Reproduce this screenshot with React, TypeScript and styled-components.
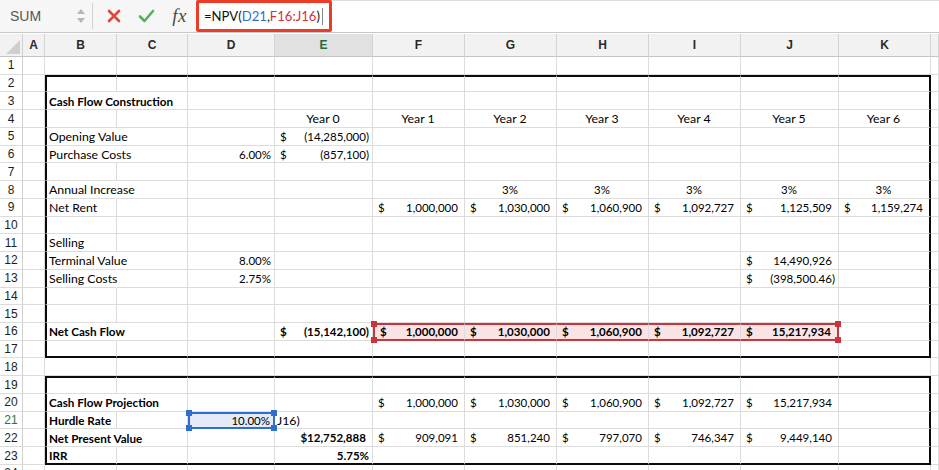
import React from "react";
import styled, { createGlobalStyle, css } from "styled-components";

const GRID = "#dcdcdc";
const CELL_FONT = `"Lato", "Open Sans", sans-serif`;
const UI_FONT = `"Liberation Sans", Arial, sans-serif`;

const GlobalStyle = createGlobalStyle`
  html, body {
    margin: 0;
    padding: 0;
    background: #ffffff;
    overflow: hidden;
  }
`;

type Align = "l" | "r" | "c";

type CellSpec = {
  t?: string;
  acct?: string;
  a?: Align;
  b?: boolean;
  pad?: boolean;
  spill?: boolean;
};

type Range = { c1: number; c2: number; r1: number; r2: number; color: string; fill?: string };

const COLS = ["A", "B", "C", "D", "E", "F", "G", "H", "I", "J", "K", ""];
const WIDTHS = [23, 22, 72, 71, 87, 98, 92, 92, 92, 92, 98, 92, 8];

const years = (from: number, to: number, make: (i: number) => CellSpec) => {
  const out: Record<string, CellSpec> = {};
  for (let i = from; i <= to; i++) out[COLS[i]] = make(i);
  return out;
};

const nums = (vals: string[], bold = false) => {
  const out: Record<string, CellSpec> = {};
  vals.forEach((v, i) => {
    out[COLS[5 + i]] = { acct: v, b: bold };
  });
  return out;
};

const SHEET: Record<number, Record<string, CellSpec>> = {
  3: { B: { t: "Cash Flow Construction", b: true, spill: true } },
  4: years(4, 10, i => ({ t: `Year ${i - 4}`, a: "c" })),
  5: { B: { t: "Opening Value", spill: true }, E: { acct: "(14,285,000)" } },
  6: { B: { t: "Purchase Costs", spill: true }, D: { t: "6.00%", a: "r" }, E: { acct: "(857,100)" } },
  8: { B: { t: "Annual Increase", spill: true }, ...years(6, 10, () => ({ t: "3%", a: "c" })) },
  9: {
    B: { t: "Net Rent" },
    ...nums(["1,000,000", "1,030,000", "1,060,900", "1,092,727", "1,125,509", "1,159,274"])
  },
  11: { B: { t: "Selling" } },
  12: { B: { t: "Terminal Value", spill: true }, D: { t: "8.00%", a: "r" }, J: { acct: "14,490,926" } },
  13: { B: { t: "Selling Costs", spill: true }, D: { t: "2.75%", a: "r" }, J: { acct: "(398,500.46)" } },
  16: {
    B: { t: "Net Cash Flow", b: true, spill: true },
    E: { acct: "(15,142,100)", b: true },
    ...nums(["1,000,000", "1,030,000", "1,060,900", "1,092,727", "15,217,934"], true)
  },
  20: {
    B: { t: "Cash Flow Projection", b: true, spill: true },
    ...nums(["1,000,000", "1,030,000", "1,060,900", "1,092,727", "15,217,934"])
  },
  21: { B: { t: "Hurdle Rate", b: true }, D: { t: "10.00%", a: "r" }, E: { t: "J16)" } },
  22: {
    B: { t: "Net Present Value", b: true, spill: true },
    E: { t: "$12,752,888", a: "r", b: true, pad: true },
    ...nums(["909,091", "851,240", "797,070", "746,347", "9,449,140"])
  },
  23: { B: { t: "IRR", b: true }, E: { t: "5.75%", a: "r", b: true } }
};

const BOXES: Range[] = [
  { c1: 1, c2: 10, r1: 2, r2: 17, color: "#0a0a0a" },
  { c1: 1, c2: 10, r1: 19, r2: 23, color: "#0a0a0a" }
];

const SELECTIONS: Range[] = [
  { c1: 5, c2: 9, r1: 16, r2: 16, color: "#c8353f", fill: "#f9e3e4" },
  { c1: 3, c2: 3, r1: 21, r2: 21, color: "#2f6ecb", fill: "#e3ebf8" }
];

const ACTIVE_COL = 4;
const ACTIVE_ROW = 21;

const Page = styled.div`
  width: 939px;
  height: 470px;
  overflow: hidden;
  background: #ffffff;
  display: flex;
  flex-direction: column;
`;

const FormulaBar = styled.div`
  flex-shrink: 0;
  height: 32px;
  display: flex;
  align-items: stretch;
  background: #f6f6f6;
  border-bottom: 1px solid #c9c9c9;
`;

const NameBox = styled.div`
  width: 93px;
  box-sizing: border-box;
  border-right: 1px solid #d3d3d3;
  margin: 3px 0;
  display: flex;
  align-items: center;
  justify-content: space-between;
  padding: 0 7px 0 10px;
  font-family: ${UI_FONT};
  font-size: 14px;
  color: #555555;
`;

const Spinner = styled.div`
  display: flex;
  flex-direction: column;
  gap: 4px;
`;

const ActionGroup = styled.div`
  display: flex;
  align-items: center;
  padding-left: 4px;
`;

const ActionButton = styled.div`
  width: 33px;
  height: 100%;
  display: flex;
  align-items: center;
  justify-content: center;
`;

const Fx = styled.span`
  font-family: "Liberation Serif", "Times New Roman", serif;
  font-style: italic;
  font-size: 19px;
  color: #4a4a4a;
  letter-spacing: 0.5px;
`;

const FormulaField = styled.div`
  flex: 1;
  background: #ffffff;
  border-top: 1px solid #dddddd;
  display: flex;
  align-items: stretch;
`;

const Highlight = styled.div`
  width: 136px;
  box-sizing: border-box;
  border: 3px solid #ec3b26;
  border-radius: 2px;
  margin-top: -1px;
  display: flex;
  align-items: center;
  padding-left: 5px;
  font-family: ${CELL_FONT};
  font-size: 13.1px;
  color: #111111;
`;

const Ref = styled.span<{ $color: string }>`
  color: ${p => p.$color};
`;

const Caret = styled.span`
  display: inline-block;
  width: 1px;
  height: 17px;
  background: #8a8a8a;
  margin-left: 2px;
`;

const Sheet = styled.div`
  flex-shrink: 0;
  margin-top: 1px;
  display: grid;
  grid-template-columns: ${WIDTHS.map(w => `${w}px`).join(" ")};
  grid-template-rows: 23px repeat(24, 17.74px);
`;

const Corner = styled.div`
  background: #f2f2f2;
  border-right: 1px solid #cfcfcf;
  border-bottom: 1px solid #c4c4c4;
  box-sizing: border-box;
  display: flex;
  align-items: flex-end;
  justify-content: flex-end;
  padding: 0 2px 2px 0;
`;

const ColHead = styled.div<{ $active?: boolean }>`
  box-sizing: border-box;
  background: ${p => (p.$active ? "#e1e1e1" : "#f2f2f2")};
  border-right: 1px solid #d4d4d4;
  border-bottom: 1px solid #c4c4c4;
  display: flex;
  align-items: center;
  justify-content: center;
  font-family: ${UI_FONT};
  font-weight: bold;
  font-size: 12px;
  color: ${p => (p.$active ? "#236b45" : "#2a2a2a")};
`;

const RowHead = styled.div<{ $active?: boolean }>`
  box-sizing: border-box;
  border-right: 1px solid #cfcfcf;
  border-bottom: 1px solid ${GRID};
  display: flex;
  align-items: center;
  justify-content: center;
  font-family: ${UI_FONT};
  font-size: 12px;
  color: ${p => (p.$active ? "#2a7449" : "#1e1e1e")};
`;

const justify = { l: "flex-start", r: "flex-end", c: "center" };

type Edge = string | undefined;

const Cell = styled.div<{
  $align: Align;
  $bold?: boolean;
  $bg?: string;
  $bt?: Edge;
  $bb?: Edge;
  $bl?: Edge;
  $br?: Edge;
  $spill?: boolean;
}>`
  position: relative;
  box-sizing: border-box;
  min-width: 0;
  display: flex;
  align-items: center;
  justify-content: ${p => justify[p.$align]};
  padding: 0 3px 0 2px;
  white-space: nowrap;
  font-family: ${CELL_FONT};
  font-size: ${p => (p.$bold ? "11.7px" : "12.3px")};
  font-weight: ${p => (p.$bold ? 700 : 400)};
  color: #000000;
  background: ${p => p.$bg || "transparent"};
  border-right: 1px solid ${p => (p.$spill ? "transparent" : GRID)};
  border-bottom: 1px solid ${GRID};
  ${p => p.$bt && css`border-top: 2px solid ${p.$bt};`}
  ${p => p.$bb && css`border-bottom: 2px solid ${p.$bb};`}
  ${p => p.$bl && css`border-left: 2px solid ${p.$bl};`}
  ${p => p.$br && css`border-right: 2px solid ${p.$br};`}
`;

const Label = styled.span<{ $num?: boolean }>`
  font-size: ${p => (p.$num ? "11.5px" : "inherit")};
`;

const Acct = styled.div`
  flex: 1;
  display: flex;
  justify-content: space-between;
  padding-left: 3px;
  font-size: 11.5px;
`;

const Paren = styled.span`
  visibility: hidden;
`;

type Corner = "tl" | "tr" | "bl" | "br";

const Handle = styled.span<{ $at: Corner; $color: string }>`
  position: absolute;
  z-index: 3;
  width: 6px;
  height: 6px;
  background: ${p => p.$color};
  ${p => (p.$at[0] === "t" ? "top: -4px;" : "bottom: -4px;")}
  ${p => (p.$at[1] === "l" ? "left: -4px;" : "right: -4px;")}
`;

const inRange = (r: Range, row: number, col: number) =>
  row >= r.r1 && row <= r.r2 && col >= r.c1 && col <= r.c2;

const isNumeric = (t?: string) => !!t && /^[\d$.,%()-]+$/.test(t);

const renderValue = (spec?: CellSpec) => {
  if (!spec) return null;
  if (spec.acct) {
    const neg = spec.acct.startsWith("(");
    return (
      <Acct>
        <span>$</span>
        <span>
          {spec.acct}
          {!neg && <Paren>)</Paren>}
        </span>
      </Acct>
    );
  }
  return (
    <Label $num={isNumeric(spec.t)}>
      {spec.t}
      {spec.pad && <Paren>)</Paren>}
    </Label>
  );
};

const SheetCell = ({ row, col }: { row: number; col: number }) => {
  const spec = SHEET[row]?.[COLS[col]];
  let bt: Edge, bb: Edge, bl: Edge, br: Edge, bg: string | undefined;
  const handles: { at: Corner; color: string }[] = [];

  BOXES.concat(SELECTIONS).forEach(r => {
    if (!inRange(r, row, col)) return;
    if (row === r.r1) bt = r.color;
    if (row === r.r2) bb = r.color;
    if (col === r.c1) bl = r.color;
    if (col === r.c2) br = r.color;
    if (r.fill) {
      bg = r.fill;
      if (row === r.r1 && col === r.c1) handles.push({ at: "tl", color: r.color });
      if (row === r.r2 && col === r.c1) handles.push({ at: "bl", color: r.color });
      if (row === r.r1 && col === r.c2) handles.push({ at: "tr", color: r.color });
      if (row === r.r2 && col === r.c2) handles.push({ at: "br", color: r.color });
    }
  });

  return (
    <Cell
      $align={spec?.acct ? "l" : spec?.a || "l"}
      $bold={spec?.b}
      $bg={bg}
      $bt={bt}
      $bb={bb}
      $bl={bl}
      $br={br}
      $spill={spec?.spill && !br}
    >
      {renderValue(spec)}
      {handles.map(h => (
        <Handle key={h.at} $at={h.at} $color={h.color} />
      ))}
    </Cell>
  );
};

const CloseIcon = () => (
  <svg width="14" height="14" viewBox="0 0 14 14">
    <path d="M2 2 L12 12 M12 2 L2 12" stroke="#e2463b" strokeWidth="2.6" strokeLinecap="round" />
  </svg>
);

const CheckIcon = () => (
  <svg width="17" height="14" viewBox="0 0 17 14">
    <path d="M2 7.5 L6.5 12 L15 2" stroke="#57b15a" strokeWidth="2.6" fill="none" strokeLinecap="round" strokeLinejoin="round" />
  </svg>
);

const Arrow = ({ up }: { up?: boolean }) => (
  <svg width="8" height="5" viewBox="0 0 8 5">
    <path d={up ? "M0 5 L4 0 L8 5 Z" : "M0 0 L4 5 L8 0 Z"} fill="#b6b6b6" />
  </svg>
);

const App = () => {
  const rows = Array.from({ length: 24 }, (_, i) => i + 1);
  return (
    <Page>
      <GlobalStyle />
      <FormulaBar>
        <NameBox>
          <span>SUM</span>
          <Spinner>
            <Arrow up />
            <Arrow />
          </Spinner>
        </NameBox>
        <ActionGroup>
          <ActionButton>
            <CloseIcon />
          </ActionButton>
          <ActionButton>
            <CheckIcon />
          </ActionButton>
          <ActionButton>
            <Fx>fx</Fx>
          </ActionButton>
        </ActionGroup>
        <FormulaField>
          <Highlight>
            =NPV(<Ref $color="#2f6fc8">D21</Ref>,<Ref $color="#d2313a">F16:J16</Ref>)
            <Caret />
          </Highlight>
        </FormulaField>
      </FormulaBar>
      <Sheet>
        <Corner>
          <svg width="14" height="14" viewBox="0 0 14 14">
            <path d="M14 0 L14 14 L0 14 Z" fill="#cfcfcf" />
          </svg>
        </Corner>
        {COLS.map((c, i) => (
          <ColHead key={i} $active={i === ACTIVE_COL}>
            {c}
          </ColHead>
        ))}
        {rows.map(r => (
          <React.Fragment key={r}>
            <RowHead $active={r === ACTIVE_ROW}>{r}</RowHead>
            {COLS.map((c, ci) => (
              <SheetCell key={ci} row={r} col={ci} />
            ))}
          </React.Fragment>
        ))}
      </Sheet>
    </Page>
  );
};

export default App;
